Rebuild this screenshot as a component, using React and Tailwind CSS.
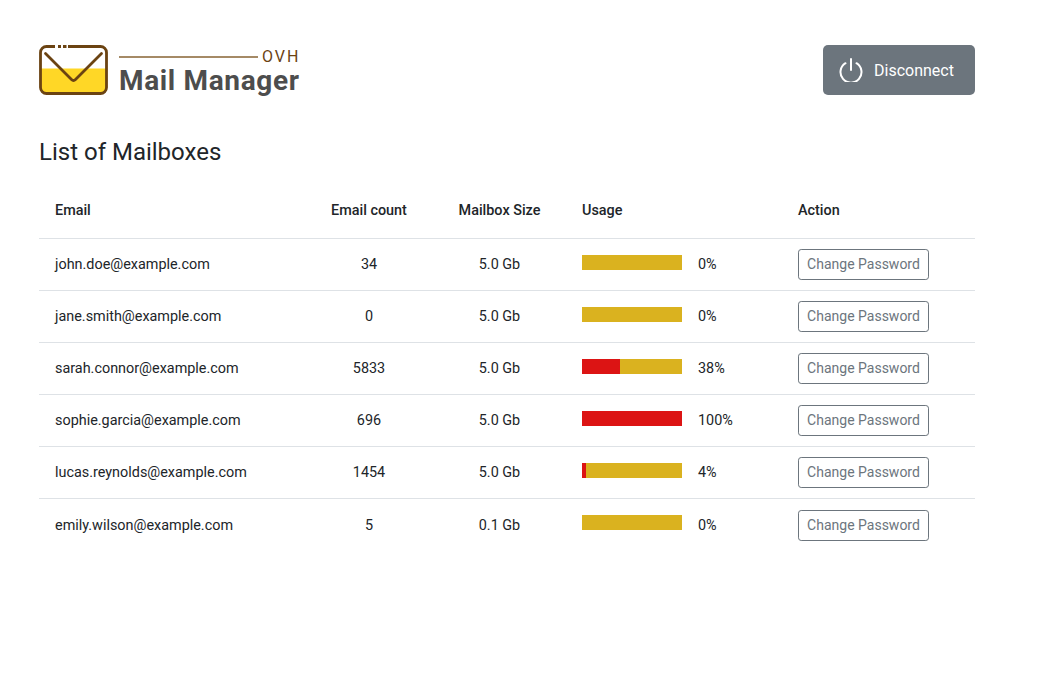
import React from "react";

const rows = [
  ["john.doe@example.com", "34", "5.0 Gb", 0],
  ["jane.smith@example.com", "0", "5.0 Gb", 0],
  ["sarah.connor@example.com", "5833", "5.0 Gb", 38],
  ["sophie.garcia@example.com", "696", "5.0 Gb", 100],
  ["lucas.reynolds@example.com", "1454", "5.0 Gb", 4],
  ["emily.wilson@example.com", "5", "0.1 Gb", 0],
];

function Logo() {
  return (
    <div className="flex items-start">
      <svg width="70" height="50" viewBox="0 0 70 50" className="shrink-0">
        <path d="M1.5 23.5H67.5V42.5a6 6 0 0 1-6 6H7.5a6 6 0 0 1-6-6Z" fill="#ffd726" />
        <path d="M16 1.5H7.5A6 6 0 0 0 1.5 7.5V42.5A6 6 0 0 0 7.5 48.5H61.5A6 6 0 0 0 67.5 42.5V7.5A6 6 0 0 0 61.5 1.5H29" fill="none" stroke="#6b4312" strokeWidth="2.8" />
        <path d="M19 1.5h3M24 1.5h3.5" fill="none" stroke="#6b4312" strokeWidth="2.8" />
        <path d="M6.5 8.5L32.5 34.5Q34.5 36.5 36.5 34.5L62.5 8.5" fill="none" stroke="#6b4312" strokeWidth="2.8" strokeLinecap="round" />
      </svg>
      <div className="ml-[10px] w-[182px]">
        <div className="flex items-center h-[20px] mt-[2px]">
          <div className="w-[139px] h-[2px] bg-[#a58a66]" />
          <span className="ml-[4px] text-[16px] leading-[20px] tracking-[2px] text-[#6b4312]">OVH</span>
        </div>
        <div className="text-[28px] leading-[27px] tracking-[0.65px] font-bold text-[#4d4d4d] whitespace-nowrap">Mail Manager</div>
      </div>
    </div>
  );
}

function Row({ row, last }) {
  const [email, count, size, pct] = row;
  return (
    <tr className={last ? "" : "border-b border-[#dee2e6]"}>
      <td className={`pl-4 pt-[2px] align-middle ${last ? "h-[54px]" : "h-[52px]"}`}>{email}</td>
      <td className="pt-[2px] text-center align-middle">{count}</td>
      <td className="pt-[2px] text-center align-middle">{size}</td>
      <td className="pl-4 align-middle">
        <div className="flex items-center">
          <div className={`w-[100px] h-[15px] bg-[#dab21f] ${last ? "mb-[5px]" : "mb-[3px]"}`}>
            <div className="h-full bg-[#dc1414]" style={{ width: `${pct}%` }} />
          </div>
          <span className="ml-4 pt-[2px]">{pct}%</span>
        </div>
      </td>
      <td className="pl-4 align-middle">
        <button className="w-[131px] h-[31px] border border-[#6c757d] rounded-[3.2px] text-[#6c757d] text-[14px] bg-white">Change Password</button>
      </td>
    </tr>
  );
}

export default function App() {
  return (
    <div className="min-h-[693px] bg-white text-[#212529] font-['Roboto',sans-serif] text-[14.4px]">
      <div className="w-[936px] ml-[39px] pt-[45px]">
        <header className="flex justify-between items-start">
          <Logo />
          <button className="w-[152px] h-[50px] bg-[#6c757d] rounded-[5px] flex items-center pl-[16px] pt-[1px] text-white text-[16px]">
            <svg width="24" height="24" viewBox="0 0 24 24" fill="none" stroke="#fff" strokeWidth="2" strokeLinecap="round" className="-mt-[1px]">
              <path d="M12 1v11" />
              <path d="M6.5 5.2A10.5 10.5 0 1 0 17.5 5.2" />
            </svg>
            <span className="ml-[11px]">Disconnect</span>
          </button>
        </header>
        <h1 className="mt-[43px] text-[24px] leading-[29px]">List of Mailboxes</h1>
        <table className="mt-[16px] w-[936px] table-fixed border-collapse">
          <colgroup>
            <col className="w-[266px]" />
            <col className="w-[128px]" />
            <col className="w-[133px]" />
            <col className="w-[216px]" />
            <col className="w-[193px]" />
          </colgroup>
          <thead>
            <tr className="border-b border-[#dee2e6] font-medium">
              <th className="pl-4 pt-[2px] h-[55px] text-left font-medium">Email</th>
              <th className="pt-[2px] text-center font-medium">Email count</th>
              <th className="pt-[2px] text-center font-medium">Mailbox Size</th>
              <th className="pl-4 pt-[2px] text-left font-medium">Usage</th>
              <th className="pl-4 pt-[2px] text-left font-medium">Action</th>
            </tr>
          </thead>
          <tbody>
            {rows.map((r, i) => (
              <Row key={r[0]} row={r} last={i === rows.length - 1} />
            ))}
          </tbody>
        </table>
      </div>
    </div>
  );
}
